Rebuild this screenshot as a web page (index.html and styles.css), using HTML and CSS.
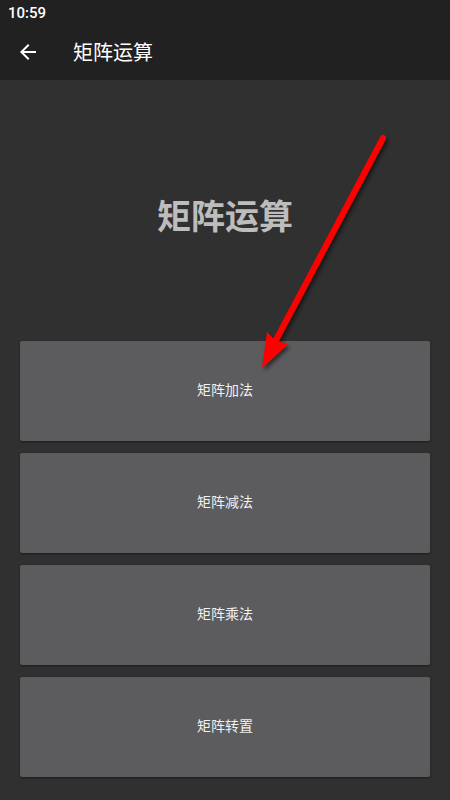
FILE: index.html
```html
<!DOCTYPE html>
<html lang="zh">
<head>
<meta charset="utf-8">
<title>矩阵运算</title>
<link rel="stylesheet" href="styles.css">
</head>
<body>
<div class="screen">
  <div class="statusbar"><span class="time">10:59</span></div>
  <header class="toolbar">
    <span class="back">
      <svg width="24" height="24" viewBox="0 0 24 24"><path d="M20 11H7.83l5.59-5.59L12 4l-8 8 8 8 1.41-1.41L7.83 13H20v-2z" fill="#ffffff"/></svg>
    </span>
    <span class="toolbar-title">矩阵运算</span>
  </header>
  <main class="content">
    <h1 class="heading">矩阵运算</h1>
    <div class="buttons">
      <button class="btn">矩阵加法</button>
      <button class="btn">矩阵减法</button>
      <button class="btn">矩阵乘法</button>
      <button class="btn">矩阵转置</button>
    </div>
  </main>
  <svg class="annotation" width="450" height="800" viewBox="0 0 450 800">
    <defs>
      <filter id="sh" x="-20%" y="-20%" width="140%" height="140%">
        <feDropShadow dx="2" dy="3" stdDeviation="2" flood-color="#000" flood-opacity="0.55"/>
      </filter>
    </defs>
    <g filter="url(#sh)">
      <line x1="383" y1="138" x2="276" y2="340" stroke="#ff0000" stroke-width="6" stroke-linecap="round"/>
      <polygon points="262,368 267,332 276,341 288,344" fill="#ff0000"/>
    </g>
  </svg>
</div>
</body>
</html>
```

FILE: styles.css
```css
* { box-sizing: border-box; }
html, body { margin: 0; padding: 0; }
body {
  background: #303030;
  font-family: Roboto, "Noto Sans", "Noto Sans CJK SC", sans-serif;
}
.screen {
  position: relative;
  width: 450px;
  height: 800px;
  overflow: hidden;
  display: flex;
  flex-direction: column;
}
.statusbar {
  height: 24px;
  background: #212121;
  display: flex;
  align-items: center;
  padding-left: 8px;
}
.time {
  color: #ffffff;
  font-family: Roboto, sans-serif;
  font-weight: 500;
  font-size: 15px;
  line-height: 24px;
  margin-top: 1px;
}
.toolbar {
  height: 56px;
  background: #212121;
  display: flex;
  align-items: center;
  padding-left: 16px;
}
.back {
  width: 24px;
  height: 24px;
  display: flex;
}
.toolbar-title {
  margin-left: 33px;
  color: #ffffff;
  font-family: "Noto Sans CJK SC", sans-serif;
  font-size: 20px;
  line-height: 24px;
}
.content {
  flex: 1;
  display: flex;
  flex-direction: column;
  padding: 0 20px;
}
.heading {
  margin: 110px 0 0;
  height: 50px;
  text-align: center;
  color: #bdbdbd;
  font-family: "Noto Sans CJK SC", sans-serif;
  font-weight: 700;
  font-size: 34px;
  line-height: 50px;
}
.buttons {
  margin-top: 101px;
  display: flex;
  flex-direction: column;
  gap: 12.5px;
}
.btn {
  height: 99.5px;
  border: none;
  border-radius: 2px;
  background: #5c5c5e;
  color: #f0f0f0;
  font-family: "Noto Sans CJK SC", sans-serif;
  font-size: 14px;
  box-shadow: 0 1px 2px rgba(0,0,0,0.45);
  padding: 0 0 3px;
}
.annotation {
  position: absolute;
  left: 0;
  top: 0;
  pointer-events: none;
}
```
